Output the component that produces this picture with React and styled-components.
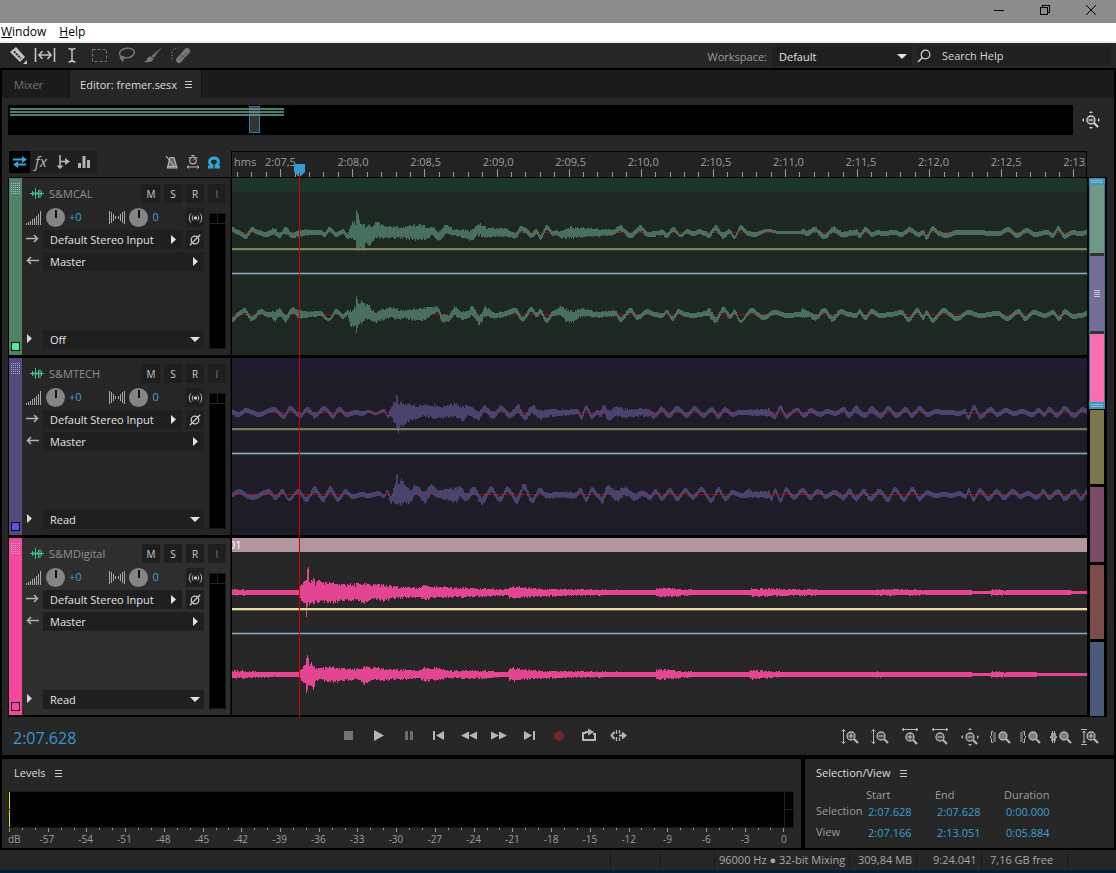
import React, { useState } from 'react';
import styled, { createGlobalStyle } from 'styled-components';

const GlobalStyle = createGlobalStyle`
  * {
    box-sizing: border-box;
  }

  body {
    margin: 0;
    background: #000;
  }

  body, button, input, select {
    font-family: "Open Sans", "Noto Sans", sans-serif;
    font-size: 11px;
  }

  button, input, select {
    margin: 0;
    padding: 0;
    border: none;
    border-radius: 0;
    background: none;
    color: inherit;
    outline: none;
  }

  select {
    appearance: none;
  }

  svg {
    display: block;
    flex: none;
  }
`;

/* ---------- time ---------- */

const VIEW_START = 127.166;
const VIEW_LENGTH = 5.884;
const PLAYHEAD = 127.628;

const percentOf = (seconds) => (seconds / VIEW_LENGTH) * 100;

const labelTimes = Array.from({ length: 12 }, (_, i) => 127.5 + i * 0.5);
const tickTimes = Array.from({ length: 59 }, (_, i) => 1272 + i);

const formatTime = (t) => {
  const tenths = Math.round(t * 10) - 1200;
  const s = Math.floor(tenths / 10);
  return `2:${String(s).padStart(2, '0')},${tenths % 10}`;
};

/* ---------- wave data ---------- */

// "x centre half" triples, x is divided by step and moved by offset
const points = (offset, step, text) =>
  text.trim().split(',').map((p) => {
    const [x, c, h = 2] = p.trim().split(' ').map(Number);
    return [x / step + offset, c, h];
  });

const calTop = points(0, 1, `0 3,6 0,13 -4,20 3,26 0,33 -2,42 1 4,47 -3,53 2 4,60 -3,67 -1 3,75 0 3,88 0,92 -2,97 3,
  104 -2,111 1,115 -4,118 0 6,120 3 10,123 0 11,124 2 21,126 -1 19,128 -3 14,131 -4 15,134 -2 8,137 -3 12,140 -2 9,
  144 2 9,150 1 7,160 0 7,170 0 6,180 0 8,190 0 9,194 -1 6,200 1 5,206 -4 5,214 3 5,222 0 3,230 -1 4,238 -3 5,
  247 3 7,255 0 5,270 0 5,283 -3 3,289 4 3,293 2,299 -3 3,304 1,308 -5,314 5,321 -1,323 0,329 -2 4,338 0 6,350 0 5,
  365 0 4,380 0 3,388 4 3,398 -3,408 4 3,416 -2,430 0 3,434 -3,441 3,448 -3 1,455 1,461 -1,467 1,473 -1,476 -3 3,
  483 4 3,491 -3 3,497 1,502 -5 1,508 5,516 -1,522 -2,535 2 1,548 0 1,560 0 1,568 0 1,571 1 3,574 -1,582 3 3,592 -4,
  601 3 3,610 -2 3,624 0 3,627 -3,633 3,640 -2,645 0,651 -1,662 0,669 -2,677 3,686 -2,691 0,694 -5,700 4,707 -1,
  713 -3,725 0,740 0,766 -1,776 3,784 -3,795 2,802 -2,815 0,820 -3,826 4,832 -4,840 0,848 -1,855 0`);

const calBottom = points(0, 1, `0 -5,2 -4,5 0,12 4,19 -4,29 3,35 0,39 0 3,42 -2 6,47 2 5,53 -4 4,60 4 3,67 0 4,75 0 3,
  88 1,96 -5 1,104 3,111 -2,115 2,118 -4 8,121 -3 10,123 -2 12,124 -1 20,126 0 12,128 2 12,129 4 14,132 3 9,135 3 8,
  141 -2 6,143 -4 5,150 0 6,158 2 6,165 0 6,172 0 4,180 0 6,190 0 7,198 3 5,205 5 3,210 -4 4,216 -4 3,222 3 5,
  230 -1 4,236 0 4,239 4 5,247 -5 5,253 3 5,262 -1 3,270 0 3,283 4,290 -5 3,299 5,304 0,308 3,314 -6,321 1,328 4 5,
  334 -1 7,340 -2 6,350 2 4,365 0 3,383 1 3,388 -5,398 4,405 -3,415 3,422 0,430 -1,434 3 1,440 -4,446 3,453 0,461 -1,
  467 0,474 1,476 3 5,480 -2 5,483 -6 3,491 5 3,498 -2,502 3,508 -7 1,519 4,531 -3,542 2,555 -1,568 0,570 2 5,
  576 0 3,583 -3 3,592 4,600 -4 3,609 3,616 0,624 -1,627 3,633 -3,639 3,648 -1,658 0,669 2,676 -5,685 4,691 -3,694 2,
  700 -6,711 4,724 -4,736 2,748 -1,765 1,775 -4,786 3,793 -4,801 2,813 -1,820 2,827 -4,832 3,841 -2,848 -1,855 1`);

const techTop = [
  ...points(-7, 3, `21 0 3,38 -2,62 2,100 -2,145 3,175 -4,193 4,225 -3,245 3,268 -3 3,298 4,322 -4,340 3,365 -2,390 0,
    410 -1,430 1 1,450 -1 1,475 2 1,487 -4 1,495 0 4,503 0 11,510 0 12,514 0 20,519 -6 17,525 0 13,537 -3 13,545 0 9,
    550 0 10,575 0 7,600 2 6,625 0 8,650 0 6,688 2 8,712 -1 8,728 2 5,760 -3 5,776 4 3,803 -3 4,827 4 3,852 -3 3,
    880 4 5`),
  ...points(288, 3, `0 0 4,12 -5 3,35 3 5,60 -2 5,90 0 4,140 0 3,172 1,182 -5,197 5 3,214 -4,232 0,240 -1 4,250 3 5,
    265 -3 6,290 1 5,315 -1 5,350 0 4,380 0 4,402 -3 3,424 3 3,446 -3,470 4 3,500 -3,522 4,549 -3,575 3,593 -4,613 3,
    637 -2,655 0,690 0 3,745 0 4,763 -4,780 5,797 -4,830 3 1,850 -3,872 2,890 -1`),
  ...points(588, 3, `0 -2,20 1,45 -1,70 3,86 -3 3,104 3 4,135 -3 3,152 3 4,182 -3 3,204 4,228 -3,257 3,275 -3,297 4,
    320 -2,350 1,370 0,390 0,415 -1,433 1,444 -5,460 5,480 -4,510 3,530 -2,557 2,580 -1,605 1,635 -2,655 2,670 -2,
    686 3,710 -3,732 4,762 -3,787 3,801 1`),
];

const techBottom = [
  ...points(-7, 3, `21 0,38 3,80 -3,130 3,150 -3,172 3,190 -5 1,218 3,243 -5,268 5 4,292 -5 3,315 5 3,338 -5,360 3,
    382 -2,410 0,430 -1,460 1,475 -2 1,485 3 1,497 -6 4,505 0 8,512 2 14,514 5 19,520 1 12,529 3 14,540 0 10,
    555 -2 7,570 5 5,598 -3 6,618 5 6,640 0 4,665 0 6,690 -1 9,705 3 6,722 -3 4,745 4 4,770 -6 4,797 5 3,823 -5 3,
    847 5 3,875 -6 4,890 3 4`),
  ...points(288, 3, `0 3 4,10 8 4,35 -6 3,58 4 3,80 -1 3,120 0 3,165 -1 3,180 4,197 -5,215 5,235 -2,244 -6 4,262 5 5,
    290 -2 6,312 3 5,345 -2 4,370 1 3,388 -3,405 3 3,425 -4,448 4,470 -4,495 4,517 -3,543 5,573 -6,594 5,615 -4,637 2,
    665 -1,685 1 5,700 0 3,745 0 4,753 -4,764 4,780 -6,797 5,820 -3,847 4,870 -3,890 3`),
  ...points(588, 3, `0 2,15 -2,42 2,70 -3 3,87 3 3,107 -4 3,130 3 3,150 -4 3,178 3 3,202 -5,224 5,250 -5,276 5,297 -4,
    320 2,345 -1,370 0,395 -1,415 1,435 -2,445 4,459 -5,478 4,505 -4,528 3,550 -3,577 3,600 -2,622 1,650 -3,669 3,
    687 -3,713 3,732 -4,762 3,783 -4,801 4`),
];

const digitalTop = [
  ...points(-7, 3, `21 0 3,100 0 2,222 0 2,226 0 8,237 0 11,241 0 12,243 -7 19,246 5 20,249 7 19,251 0 14,255 0 13,
    262 0 13,265 2 15,270 0 10,277 1 14,290 0 11,300 0 10,330 0 11,360 0 9,385 0 9,415 0 11,440 0 8,480 0 9,520 0 6,
    585 0 5,590 0 8,640 0 6,700 0 5,780 0 4,848 0 3,853 0 7,883 0 6`),
  ...points(288, 3, `0 0 6,60 0 4,200 0 3,403 0 2,408 0 5,470 0 4,530 0 2,686 0 2,690 0 4,760 0 4,830 0 3,890 0 3`),
  ...points(588, 3, `0 0 2,157 0 2,160 0 3,240 0 3,400 0 2,510 0 1,513 0 3,600 0 2,700 0 2,801 0 1`),
];

const digitalBottom = [
  ...points(-7, 3, `21 0 4,100 0 3,222 0 2,226 0 5,240 0 10,242 0 14,244 -3 22,247 4 17,251 0 12,257 0 14,264 -4 13,
    270 0 9,285 0 7,320 0 8,340 0 8,370 0 6,400 0 6,415 0 10,440 0 7,500 0 6,585 0 4,590 0 7,640 0 7,660 0 4,780 0 4,
    848 0 2,853 0 8,870 0 7,883 0 6`),
  ...points(288, 3, `0 0 6,60 0 4,200 0 3,403 0 2,408 0 6,470 0 4,530 0 2,686 0 2,690 0 5,760 0 3,830 0 2,890 0 2`),
  ...points(588, 3, `0 0 2,157 0 2,160 0 3,240 0 2,400 0 2,510 0 1,513 0 3,600 0 2,700 0 1,801 0 1`),
];

const noise = (n) => {
  let v = Math.imul(n + 1, 2654435761);
  v ^= v >>> 15;
  v = Math.imul(v, 2246822519);
  v ^= v >>> 13;
  return (v >>> 0) / 4294967296;
};

// one column per pixel
const wavePath = (data, centre) => {
  let d = '';
  let i = 0;
  for (let x = 0; x < 855; x += 1) {
    while (i < data.length - 2 && data[i + 1][0] <= x) i += 1;
    const [x0, c0, h0] = data[i];
    const [x1, c1, h1] = data[i + 1];
    const k = Math.min(1, Math.max(0, (x - x0) / (x1 - x0 || 1)));
    const ease = (1 - Math.cos(Math.PI * k)) / 2;
    const c = c0 + (c1 - c0) * ease;
    const h = h0 + (h1 - h0) * k;
    const rough = h > 2.5 ? Math.min(4, h * 0.45) : 0;
    const top = Math.round(centre - c - h + rough * noise(x));
    const bottom = Math.round(centre - c + h - rough * noise(x + 999)) + 1;
    d += `M${x} ${top}h1V${bottom}h-1z`;
  }
  return d;
};

const tracks = [
  {
    name: 'S&MCAL', mode: 'Off', strip: '#4f816b', led: '#45ef9e', head: '#1d3429', lane: '#1d2823',
    wave: '#4a7a64', volume: '#7f7f59', channels: [calTop, calBottom],
  },
  {
    name: 'S&MTECH', mode: 'Read', strip: '#524b7e', led: '#5f4fe2', head: '#1f1b31', lane: '#1e1c27',
    wave: '#504876', volume: '#7b765a', channels: [techTop, techBottom],
  },
  {
    name: 'S&MDigital', mode: 'Read', strip: '#f4479d', led: '#f4479d', head: '#b294a2', lane: '#262626',
    wave: '#e34592', volume: '#e8df9c', channels: [digitalTop, digitalBottom], selected: true, clip: '01',
  },
];

/* ---------- window ---------- */

const Window = styled.div`
  display: flex;
  flex-direction: column;
  min-height: 100vh;
  background: #000;
  color: #d6d6d6;
  line-height: 16px;
`;

const TitleBar = styled.div`
  display: flex;
  justify-content: flex-end;
  height: 23px;
  padding-right: 2px;
  background: #8c8c8c;
`;

const CaptionButton = styled.button`
  display: flex;
  align-items: center;
  justify-content: center;
  width: 46px;
  padding-bottom: 3px;
  color: #000;
`;

const MenuBar = styled.nav`
  display: flex;
  gap: 13px;
  height: 20px;
  padding-left: 1px;
  background: #fff;
  border-bottom: 2px solid #f0f0f0;
`;

const MenuItem = styled.button`
  color: #000;
  font-size: 12px;
  line-height: 18px;
`;

const ToolBar = styled.div`
  display: flex;
  align-items: center;
  height: 25px;
  padding-right: 5px;
  background: #262626;
`;

const Tools = styled.div`
  display: flex;
  flex: 1;
  padding-left: 4px;
`;

const Tool = styled.button`
  display: flex;
  align-items: center;
  justify-content: center;
  width: 27px;
  height: 24px;
  padding-bottom: 1px;
  color: ${(p) => (p.$dim ? '#777' : '#c4c4c4')};
`;

const WorkspaceLabel = styled.label`
  padding: 2px 5px 0 0;
  color: #9a9a9a;
`;

const SelectBox = styled.div`
  display: grid;
  align-items: center;
  flex: 1;
  height: 19px;
  background: #1f1f1f;
  color: #e2e2e2;

  select, svg {
    grid-area: 1 / 1;
  }

  select {
    width: 100%;
    height: 19px;
    padding-left: 7px;
    cursor: pointer;
  }

  svg {
    justify-self: end;
    margin-right: ${(p) => p.$inset || 5}px;
    pointer-events: none;
  }
`;

const WorkspaceSelect = styled(SelectBox)`
  flex: none;
  width: 140px;
  margin: 2px 5px 0 0;
`;

const SearchBox = styled.label`
  display: flex;
  align-items: center;
  gap: 11px;
  width: 194px;
  height: 19px;
  background: #202020;

  input {
    flex: 1;
    min-width: 0;
  }

  input::placeholder {
    color: #d6d6d6;
    opacity: 1;
  }
`;

const Panel = styled.section`
  background: #262626;
`;

/* ---------- editor ---------- */

const EditorPanel = styled(Panel)`
  margin: 2px 2px 4px;
`;

const TabBar = styled.div`
  display: flex;
  height: 28px;
  background: #1b1b1b;
`;

const Tab = styled.button`
  display: flex;
  align-items: center;
  gap: 8px;
  padding: 0 ${(p) => (p.$active ? '9px 0 10px' : '26px 0 12px')};
  background: ${(p) => (p.$active ? '#262626' : 'transparent')};
  color: ${(p) => (p.$active ? '#dcdcdc' : '#757575')};
  border-right: 1px solid #111;
`;

const OverviewRow = styled.div`
  display: flex;
  align-items: center;
  padding: 7px 14px 16px 6px;
`;

const Overview = styled.div`
  position: relative;
  flex: 1;
  height: 30px;
  padding: 3px 2px;
  margin-right: 9px;
  background: #000;
`;

const OverviewClip = styled.div`
  width: 25.8%;
  height: 2px;
  margin-bottom: 1px;
  background: #4f806a;
`;

const OverviewRange = styled.div`
  position: absolute;
  top: 1px;
  left: 22.6%;
  width: 11px;
  height: 27px;
  border: 1px solid #337ba6;
  background: rgba(150, 150, 150, 0.35);
`;

const Arrange = styled.div`
  display: flex;
  align-items: flex-end;
  padding: 0 7px 0 6px;
`;

const Timeline = styled.div`
  position: relative;
  flex: 1;
  min-width: 0;
`;

const RulerRow = styled.div`
  display: flex;
  height: 26px;
`;

const TrackTools = styled.div`
  display: flex;
  justify-content: space-between;
  width: 223px;
  padding: 0 7px 4px 1px;
`;

const ToolGroup = styled.div`
  display: flex;
  padding-right: ${(p) => (p.$plain ? 0 : 3)}px;
  background: ${(p) => (p.$plain ? 'none' : '#1f1f1f')};
`;

const SmallTool = styled.button`
  display: flex;
  align-items: center;
  justify-content: center;
  width: 21px;
  height: 22px;
  background: ${(p) => (p.$on ? '#000' : 'transparent')};
  color: ${(p) => (p.$blue ? '#2fa7dc' : '#b4b4b4')};
`;

const FxTool = styled(SmallTool)`
  width: 22px;
  padding-bottom: 3px;
  font-size: 15px;
  font-style: italic;
`;

const Ruler = styled.div`
  display: flex;
  flex-direction: column;
  justify-content: space-between;
  flex: 1;
  overflow: hidden;
  background: #222;
  border: 1px solid #000;
  border-bottom: none;
  color: #9c9c9c;
`;

const RulerLabels = styled.div`
  display: flex;
  padding-top: 3px;
  line-height: 14px;
  white-space: nowrap;
`;

const RulerLabel = styled.div`
  flex: none;
  width: ${percentOf(0.5)}%;
  text-align: center;
`;

const RulerUnit = styled.div`
  flex: none;
  width: ${percentOf(127.25 - VIEW_START)}%;
  text-indent: 2px;
`;

const RulerTicks = styled.div`
  display: flex;
  align-items: flex-end;
  height: 8px;
  padding-left: ${percentOf(127.2 - VIEW_START)}%;
`;

const RulerTick = styled.div`
  flex: none;
  width: ${percentOf(0.1)}%;
  height: ${(p) => (p.$major ? 8 : 5)}px;
  border-left: 1px solid #9a9a9a;
`;

const TrackList = styled.div`
  display: flex;
  flex-direction: column;
  gap: 3px;
  padding: 1px 0 2px 1px;
  background: #000;
`;

const Playhead = styled.div`
  position: absolute;
  top: 13px;
  bottom: 0;
  display: flex;
  flex-direction: column;
  align-items: center;
  width: 11px;
  margin-left: -5px;
  pointer-events: none;

  &::after {
    content: '';
    flex: 1;
    width: 1px;
    background: #cf0000;
  }
`;

/* ---------- track ---------- */

const TrackRow = styled.article`
  display: flex;
  height: 177px;
`;

const Strip = styled.div`
  display: flex;
  flex-direction: column;
  align-items: center;
  justify-content: space-between;
  width: 13px;
  padding: 5px 0 4px;
  background: ${(p) => p.$color};
`;

const Led = styled.div`
  width: 9px;
  height: 9px;
  border: 1px solid #0c0c0c;
  background: ${(p) => p.$color};
`;

const TrackHead = styled.div`
  display: flex;
  flex-direction: column;
  gap: 5px;
  width: 209px;
  padding: 6px 4px;
  background: ${(p) => (p.$selected ? '#2e2e2e' : '#262626')};
  border-right: 1px solid #161616;
`;

const Line = styled.div`
  display: flex;
  align-items: center;
  gap: 4px;
  height: 19px;
`;

const NameIcon = styled.div`
  padding: 0 1px 0 4px;
`;

const TrackName = styled.input`
  flex: 1;
  min-width: 0;
  color: #8f8f8f;
`;

const SquareButton = styled.button`
  display: flex;
  align-items: center;
  justify-content: center;
  flex: none;
  width: 18px;
  height: 19px;
  background: #1e1e1e;
  color: ${(p) => (p.$dim ? '#747474' : '#c8c8c8')};
  font-size: 10px;
`;

const TrackBody = styled.div`
  display: flex;
  flex: 1;
  gap: 5px;
`;

const Controls = styled.div`
  display: flex;
  flex-direction: column;
  gap: 3px;
  width: 178px;

  ${Line}:last-child {
    margin-top: auto;
  }
`;

const Knob = styled.div`
  flex: none;
  width: 19px;
  height: 19px;
  border-radius: 50%;
  background: linear-gradient(#111, #111) center 2px / 2px 8px no-repeat, #858585;
`;

const KnobValue = styled.input`
  width: ${(p) => p.$width}px;
  height: 17px;
  min-width: 0;
  margin-bottom: 2px;
  color: #3aa0d8;
`;

const LineIcon = styled.div`
  display: flex;
  width: 13px;
  padding-bottom: 2px;
  color: #b0b0b0;
`;

const Disclosure = styled.button`
  width: 13px;
  padding: 0 0 2px 1px;
`;

const Meter = styled.div`
  flex: 1;
  margin-top: 5px;
  background:
    linear-gradient(#262626, #262626) 0 9px / 100% 1px no-repeat,
    linear-gradient(#262626, #262626) center 0 / 1px 9px no-repeat,
    #000;
  border: 1px solid #161616;
`;

const Lane = styled.div`
  flex: 1;
  min-width: 0;
  overflow: hidden;
  background: ${(p) => p.$color};
  border-left: 1px solid #000;
`;

const ClipHead = styled.div`
  height: 14px;
  overflow: hidden;
  background: ${(p) => p.$color};
  color: #fff;
  line-height: 14px;
  text-indent: -3px;
`;

const WaveSvg = styled.svg`
  width: 100%;
  height: 163px;
`;

const MiniMap = styled.div`
  display: flex;
  flex-direction: column;
  gap: 3px;
  width: 20px;
  height: 540px;
  padding: 1px 2px;
  background: #000;
`;

const MiniRange = styled.div`
  position: relative;
  display: flex;
  flex-direction: column;
  gap: 3px;
  height: 231px;
  margin: 0 0 -2px;
  background: #333;
  border: solid #2d7ca6;
  border-width: 0 1px;
`;

const MiniTrack = styled.div`
  display: flex;
  align-items: center;
  justify-content: center;
  flex: 1;
  margin: 0 ${(p) => (p.$out ? 1 : 0)}px;
  background: ${(p) => p.$color};
`;

// grab bars on the ends of the visible range
const MiniHandle = styled.div`
  position: absolute;
  left: -1px;
  right: -1px;
  ${(p) => (p.$end ? 'bottom' : 'top')}: 0;
  height: 7px;
  border: 2px solid #3d94bb;
  background: linear-gradient(#8bbfd2 1px, #3d94bb 1px 2px, #8bbfd2 2px);
`;

/* ---------- transport ---------- */

const Transport = styled.div`
  display: flex;
  align-items: center;
  height: 38px;
  padding: 2px 9px 0 11px;
`;

const Clock = styled.output`
  flex: 0 0 320px;
  padding-top: 2px;
  color: #3399cf;
  font-size: 16px;
  line-height: 24px;
`;

const TransportButton = styled.button`
  display: flex;
  align-items: center;
  justify-content: center;
  width: 30px;
  height: 24px;
  padding-bottom: ${(p) => (p.$zoom ? 0 : 4)}px;
  color: #b6b6b6;
`;

const Group = styled.div`
  display: flex;
  margin-left: ${(p) => (p.$end ? 'auto' : 0)};
`;

/* ---------- bottom panels ---------- */

const BottomRow = styled.div`
  display: flex;
  gap: 4px;
  height: 89px;
  margin: 0 2px 2px;
`;

const LevelsPanel = styled(Panel)`
  flex: 1;
  min-width: 0;
  padding: 6px 7px 0 6px;
`;

const SelectionPanel = styled(Panel)`
  width: 309px;
  padding: 6px 0 0 11px;
`;

const PanelTitle = styled.h2`
  display: flex;
  align-items: center;
  gap: 9px;
  margin: 0;
  padding-left: ${(p) => p.$inset || 0}px;
  color: #dcdcdc;
  font-size: 11px;
  font-weight: 400;
  line-height: 16px;
`;

const LevelMeter = styled.div`
  display: flex;
  flex-direction: column;
  gap: 1px;
  height: 37px;
  margin-top: 10px;
  border: 1px solid #1a1a1a;
  background:
    linear-gradient(#222, #222) right 8px top 0 / 1px 100% no-repeat,
    linear-gradient(#222, #222) right 0 top 17px / 8px 1px no-repeat,
    #000;
`;

const LevelBar = styled.div`
  flex: 1;
  border-left: 1px solid #e8e800;
`;

const DbTicks = styled.div`
  display: flex;
  margin: 0 10px 0 1px;
  height: 5px;
`;

const DbTick = styled.div`
  flex: 1 1 0;
  height: ${(p) => (p.$major ? 4 : 2)}px;
  border-left: 1px solid #999;

  &:last-child {
    flex: 0 0 1px;
  }
`;

const DbLabels = styled.div`
  display: flex;
  margin: 0 10px 0 0;
  color: #9c9c9c;
  font-size: 10px;
  line-height: 12px;

  span {
    flex: none;
    width: 5%;
    text-align: center;
  }

  span:first-child {
    width: 2.5%;
    text-align: left;
  }
`;

const Times = styled.table`
  margin-top: 6px;
  border-collapse: collapse;
  color: #9c9c9c;

  th, td {
    width: 69px;
    padding: 0;
    font-weight: 400;
    line-height: 16px;
    text-align: left;
  }

  th:first-child, td:first-child {
    width: 50px;
  }

  tbody tr:last-child > * {
    padding-top: 5px;
  }

  input {
    display: block;
    width: 60px;
    height: 16px;
    padding-left: 2px;
    color: #3aa0d8;
  }
`;

const StatusBar = styled.footer`
  display: flex;
  flex: 1;
  justify-content: flex-end;
  min-height: 23px;
  padding-right: 48px;
  background: #262626;
  border-bottom: 3px solid #00203a;
  color: #a6a6a6;
`;

const StatusCell = styled.div`
  width: ${(p) => p.$width}px;
  padding-left: ${(p) => p.$inset || 0}px;
  border-left: 1px solid #1a1a1a;
  line-height: 20px;
  white-space: nowrap;

  &:last-child {
    border-right: 1px solid #1a1a1a;
  }
`;

/* ---------- icons ---------- */

const Icon = ({ size = 16, w = size, h = size, children, ...rest }) => (
  <svg width={w} height={h} viewBox={`0 0 ${w} ${h}`} fill="none" stroke="currentColor" aria-hidden="true" {...rest}>
    {children}
  </svg>
);

const MenuGlyph = () => (
  <Icon w={7} h={7} shapeRendering="crispEdges"><path d="M0 .5h7M0 3.5h7M0 6.5h7" stroke="#c8c8c8" /></Icon>
);

const Down = () => <Icon w={10} h={6}><path d="M0 0h10L5 5z" fill="currentColor" stroke="none" /></Icon>;
const Right = () => <Icon w={6} h={10}><path d="M0 0v9l5-4.5z" fill="currentColor" stroke="none" /></Icon>;

const Grip = () => (
  <Icon w={9} h={11} shapeRendering="crispEdges">
    <path d="M0 .5h9M0 2.5h9M0 4.5h9M0 6.5h9M0 8.5h9M0 10.5h9" stroke="#fff" strokeDasharray="1 1" opacity="0.5" />
  </Icon>
);

const WaveGlyph = () => (
  <Icon w={14} h={11} stroke="#3fbf87">
    <path d="M0 5.5h14" />
    <path d="M2.500 3v5M5.500 0v11M8.500 2v8M11.500 3v5M4 4v3M7 4v3M10 1v9" strokeWidth="1" />
  </Icon>
);

const VolumeGlyph = () => (
  <Icon w={16} h={14} stroke="#a8a8a8" shapeRendering="crispEdges">
    <path d="M.5 12v2M2.5 11v3M4.5 10v4M6.5 8v6M8.5 7v7M10.5 5v9M12.5 3v11M14.5 0v14" />
  </Icon>
);

const PanGlyph = () => (
  <Icon w={16} h={13} stroke="#a8a8a8" shapeRendering="crispEdges">
    <path d="M.5 0v13M2.5 1v11M4.5 3v7M6.5 5v3M9.5 5v3M11.5 3v7M13.5 1v11M15.5 0v13" />
  </Icon>
);

const MonitorGlyph = () => (
  <Icon w={15} h={12}>
    <circle cx="7.5" cy="6" r="1.3" fill="currentColor" />
    <path d="M5.2 3.5c-1.3 1.5-1.3 3.5 0 5M9.8 3.5c1.3 1.5 1.3 3.5 0 5M3 1.5c-2.3 2.6-2.3 6.4 0 9M12 1.5c2.3 2.6 2.3 6.4 0 9" />
  </Icon>
);

const PhaseGlyph = () => (
  <Icon w={12} h={12}><circle cx="6" cy="6" r="3.8" strokeWidth="1.3" /><path d="M.8 11.2L11.2.8" strokeWidth="1.3" /></Icon>
);

const ArrowGlyph = ({ back }) => (
  <Icon w={13} h={9}>
    <path d={back ? 'M13 4.5H2M5 1L1.5 4.5L5 8' : 'M0 4.5h11M8 1l3.5 3.5L8 8'} strokeWidth="1.6" />
  </Icon>
);

const Lens = ({ x = 9, y = 8, sign, solid }) => (
  <g>
    <circle cx={x} cy={y} r="4" fill={solid ? '#7d7d7d' : '#444'} strokeWidth="1.3" />
    <path d={`M${x + 3} ${y + 3}l4 4`} strokeWidth="2.2" />
    {sign && <path d={`M${x - 2.5} ${y}h5`} strokeWidth="1.2" />}
    {sign === '+' && <path d={`M${x} ${y - 2.5}v5`} strokeWidth="1.2" />}
  </g>
);

const FullZoom = () => (
  <Icon w={18} h={18}>
    <Lens x={9} y={9} sign="-" />
    <path d="M9 0l2 2H7zM9 18l2-2H7zM0 9l2-2v4zM18 9l-2-2v4z" fill="currentColor" stroke="none" />
  </Icon>
);

const vertical = <path d="M2.5 1v15M.5 3.5l2-2 2 2M.5 13.5l2 2 2-2" />;
const horizontal = <path d="M1 1.5h16M3 0L1 1.5 3 3M15 0l2 1.5L15 3" />;

const zoomIcons = [
  ['Zoom in amplitude', <>{vertical}<Lens x={10} sign="+" /></>],
  ['Zoom out amplitude', <>{vertical}<Lens x={10} sign="-" /></>],
  ['Zoom in time', <>{horizontal}<Lens x={9} y={9} sign="+" /></>],
  ['Zoom out time', <>{horizontal}<Lens x={9} y={9} sign="-" /></>],
  ['Zoom out full', null],
  ['Zoom to in point', <><path d="M2 3.5H.5v4L-1 9l1.500 1.500v4H2" /><path d="M2 4h3v10H2z" fill="#666" stroke="none" /><Lens x={12} y={8} solid /></>],
  ['Zoom to out point', <><path d="M-1 4h3v10h-3z" fill="#666" stroke="none" /><path d="M2 3.5h1.500v4L5 9l-1.500 1.500v4H2" /><Lens x={12} y={8} solid /></>],
  ['Zoom to selection', <><path d="M0 5h5v8H0z" fill="#888" stroke="none" /><path d="M1.500 3v4.500L-1 9l2.500 1.500V15M3.500 3v4.500L6 9l-2.500 1.500V15" /><Lens x={13} y={8} solid /></>],
  ['Zoom selected track', <><path d="M0 1.500h6M0 16.500h6M3 3v12M1.500 5L3 3l1.500 2M1.500 13L3 15l1.500-2" /><Lens x={10} sign="+" /></>],
];

const transportIcons = [
  ['Stop', <path d="M5 5h9v9H5z" fill="#747474" stroke="none" />],
  ['Play', <path d="M5 4v11l10-5.5z" fill="currentColor" stroke="none" />],
  ['Pause', <path d="M6 5h3v9H6zM11 5h3v9h-3z" fill="#6c6c6c" stroke="none" />],
  ['Previous', <path d="M4 5h2v9H4zM15 5v9L7 9.5z" fill="currentColor" stroke="none" />],
  ['Rewind', <path d="M10 5.500v8L2 9.500zM18 5.500v8l-8-4z" fill="currentColor" stroke="none" />],
  ['Fast forward', <path d="M2 5.500v8l8-4zM10 5.500v8l8-4z" fill="currentColor" stroke="none" />],
  ['Next', <path d="M5 5v9l8-4.500zM14 5h2v9h-2z" fill="currentColor" stroke="none" />],
  ['Record', <circle cx="10" cy="10" r="5" fill="#6e2828" stroke="none" />],
  ['Loop', <><path d="M7 7H4v7h12V8h-2" strokeWidth="2" /><path d="M6 6h4" strokeWidth="2" /><path d="M9 2.500v7L15 6z" fill="currentColor" stroke="none" /></>],
  ['Skip selection', <><path d="M5.500 6L2.500 9.500l3 3.500" strokeWidth="2" /><path d="M7.500 4v4M7.500 11v4M10.500 4v3.500M10.500 11.500v3.500" strokeWidth="1.300" /><path d="M10 9.500h5" strokeWidth="2" /><path d="M13 5.500v8l5-4z" fill="currentColor" stroke="none" /></>],
];

const tools = [
  ['Razor', false, <><path d="M1 6l6-5 9 10-5 5z" fill="currentColor" stroke="none" /><path d="M5 5.500l7 7" stroke="#262626" strokeWidth="2" strokeDasharray="2 1" /><path d="M18 14v4h-4z" fill="currentColor" stroke="none" /></>],
  ['Slip', false, <path d="M-.5 2v14M18.500 2v14M3 9h12M6.500 5L3 9l3.500 4M11.500 5L15 9l-3.500 4" strokeWidth="1.6" />],
  ['Time selection', false, <path d="M5.500 2.500Q9 2.500 9 5Q9 2.500 12.500 2.500M9 5v9M5.500 16Q9 16 9 13.500Q9 16 12.500 16" strokeWidth="1.4" />],
  ['Marquee', true, <path d="M2.500 3.500h14v12h-14z" strokeDasharray="3 2" />],
  ['Lasso', true, <><ellipse cx="10" cy="7" rx="7.500" ry="4.800" transform="rotate(-8 10 7)" strokeWidth="1.4" /><path d="M5 10.500q-3 1-1 2.500t3-.5-2-2q-1 3 1 5" strokeWidth="1.4" /></>],
  ['Brush', true, <path d="M18 1L9.500 12 7.500 10zM7 10.500l2.500 2.500Q8 17 0 16q3-1 3-3t4-2.500z" fill="currentColor" stroke="none" />],
  ['Spot healing', true, <><path d="M8 14L16 5" strokeWidth="6" strokeLinecap="round" /><path d="M9.500 9l5 3M10 12.500l5-5.500" stroke="#333" strokeDasharray="1 1" /><path d="M1 13V7q0-5 7-5" strokeDasharray="1 2" strokeWidth="1.4" /></>],
];

/* ---------- parts ---------- */

const Select = ({ options, value, arrow = 'right', inset, label }) => (
  <SelectBox $inset={inset}>
    <select defaultValue={value} aria-label={label}>
      {options.map((o) => <option key={o}>{o}</option>)}
    </select>
    {arrow === 'right' ? <Right /> : <Down />}
  </SelectBox>
);

const Waves = ({ track }) => (
  <WaveSvg viewBox="0 0 855 163" preserveAspectRatio="none" shapeRendering="crispEdges" role="img" aria-label={`${track.name} wave form`}>
    {track.channels.map((data, i) => (
      <React.Fragment key={i}>
        {!track.selected && <rect y={i ? 122 : 40} width="855" height="1" fill="#b00000" />}
        <path d={wavePath(data, i ? 122 : 40)} fill={track.wave} opacity={track.selected ? 1 : 0.88} />
      </React.Fragment>
    ))}
    <path d="M0 56h855v2H0z" fill={track.volume} />
    <path d="M0 58h855v1H0z" fill={track.volume} opacity="0.3" />
    <path d="M0 80h855v3H0z" fill="#3b4d55" />
    <path d="M0 81h855v1H0z" fill="#8fa9b5" />
  </WaveSvg>
);

const Track = ({ track }) => {
  const [armed, setArmed] = useState('');

  return (
    <TrackRow>
      <Strip $color={track.strip}>
        <Grip />
        <Led $color={track.led} />
      </Strip>
      <TrackHead $selected={track.selected}>
        <Line>
          <NameIcon><WaveGlyph /></NameIcon>
          <TrackName defaultValue={track.name} aria-label="Track name" />
          {['M', 'S', 'R', 'I'].map((b) => (
            <SquareButton key={b} $dim={b === 'I'} aria-pressed={armed === b} onClick={() => setArmed(b)}>{b}</SquareButton>
          ))}
        </Line>
        <TrackBody>
          <Controls>
            <Line>
              <VolumeGlyph />
              <Knob />
              <KnobValue $width={37} defaultValue="+0" aria-label="Volume" />
              <PanGlyph />
              <Knob />
              <KnobValue $width={30} defaultValue="0" aria-label="Pan" />
              <SquareButton aria-label="Monitor input"><MonitorGlyph /></SquareButton>
            </Line>
            <Line>
              <LineIcon><ArrowGlyph /></LineIcon>
              <Select label="Input" value="Default Stereo Input" options={['Default Stereo Input', 'None']} />
              <SquareButton aria-label="Invert phase"><PhaseGlyph /></SquareButton>
            </Line>
            <Line>
              <LineIcon><ArrowGlyph back /></LineIcon>
              <Select label="Output" value="Master" options={['Master', 'None']} />
            </Line>
            <Line>
              <Disclosure aria-label="Show automation"><Right /></Disclosure>
              <Select label="Automation" value={track.mode} options={['Off', 'Read', 'Latch', 'Touch', 'Write']} arrow="down" inset={4} />
            </Line>
          </Controls>
          <Meter />
        </TrackBody>
      </TrackHead>
      <Lane $color={track.lane}>
        <ClipHead $color={track.head}>{track.clip}</ClipHead>
        <Waves track={track} />
      </Lane>
    </TrackRow>
  );
};

const App = () => {
  const head = (PLAYHEAD - VIEW_START) / VIEW_LENGTH;

  return (
    <Window>
      <GlobalStyle />
      <TitleBar>
        <CaptionButton aria-label="Minimise"><Icon w={10} h={10} shapeRendering="crispEdges"><path d="M0 5.5h10" /></Icon></CaptionButton>
        <CaptionButton aria-label="Restore"><Icon w={10} h={10} shapeRendering="crispEdges"><path d="M.5 2.5h7v7h-7zM2.5 2.5v-2h7v7h-2" /></Icon></CaptionButton>
        <CaptionButton aria-label="Close"><Icon w={10} h={10}><path d="M0 0l10 10M10 0L0 10" /></Icon></CaptionButton>
      </TitleBar>
      <MenuBar>
        <MenuItem><u>W</u>indow</MenuItem>
        <MenuItem><u>H</u>elp</MenuItem>
      </MenuBar>
      <ToolBar>
        <Tools>
          {tools.map(([name, dim, art]) => (
            <Tool key={name} $dim={dim} aria-label={name}><Icon size={18} overflow="visible">{art}</Icon></Tool>
          ))}
        </Tools>
        <WorkspaceLabel htmlFor="workspace">Workspace:</WorkspaceLabel>
        <WorkspaceSelect>
          <select id="workspace" defaultValue="Default">
            <option>Default</option>
            <option>Classic</option>
          </select>
          <Down />
        </WorkspaceSelect>
        <SearchBox>
          <Icon w={14} h={14}><circle cx="8.5" cy="5.5" r="4.3" strokeWidth="1.2" /><path d="M5.5 8.5L1 13" strokeWidth="1.4" /></Icon>
          <input placeholder="Search Help" aria-label="Search Help" />
        </SearchBox>
      </ToolBar>

      <EditorPanel>
        <TabBar>
          <Tab>Mixer</Tab>
          <Tab $active>Editor: fremer.sesx <MenuGlyph /></Tab>
        </TabBar>
        <OverviewRow>
          <Overview>
            <OverviewClip />
            <OverviewClip />
            <OverviewClip />
            <OverviewRange />
          </Overview>
          <FullZoom />
        </OverviewRow>

        <Arrange>
          <Timeline>
            <RulerRow>
              <TrackTools>
                <ToolGroup>
                  <SmallTool $on $blue aria-label="Inputs and outputs">
                    <Icon size={14}><path d="M0 4.500h10M13 9.500H3" strokeWidth="2" /><path d="M9 1v7l5-3.500zM5 6v7L0 9.500z" fill="currentColor" stroke="none" /></Icon>
                  </SmallTool>
                  <FxTool aria-label="Effects">fx</FxTool>
                  <SmallTool aria-label="Sends">
                    <Icon size={14}><path d="M4 0v13M4 6.500h6M1.500 10.500L4 13l2.500-2.500" strokeWidth="1.6" /><path d="M9 3v7l5-3.500z" fill="currentColor" stroke="none" /></Icon>
                  </SmallTool>
                  <SmallTool aria-label="EQ">
                    <Icon w={12} h={12}><path d="M0 7h3v5H0zM4.500 0h3v12h-3zM9 4h3v8H9z" fill="currentColor" stroke="none" /></Icon>
                  </SmallTool>
                </ToolGroup>
                <ToolGroup $plain>
                  <SmallTool aria-label="Metronome">
                    <Icon size={14}><path d="M5 2.500h4L12 13H2.500z" fill="#666" strokeWidth="1.2" /><path d="M1 1l8 10M2 11.500h10" strokeWidth="1.2" /></Icon>
                  </SmallTool>
                  <SmallTool aria-label="Global clip stretching">
                    <Icon size={14}><circle cx="7" cy="5.500" r="3.300" strokeWidth="1.2" /><path d="M7 5.500l1.500-1.500M5.500.5h3M2.500 2l1 1M11.500 2l-1 1M1 12h12M3 10.500L1 12l2 1.500M11 10.500l2 1.500-2 1.500" /></Icon>
                  </SmallTool>
                  <SmallTool $blue aria-label="Snap">
                    <Icon size={14}><path d="M1 12h4V10.500Q2.500 9 2.500 6.500Q3 3 7 3T11.500 6.500Q11.500 9 9 10.500V12h4" strokeWidth="2.800" /></Icon>
                  </SmallTool>
                </ToolGroup>
              </TrackTools>
              <Ruler>
                <RulerLabels>
                  <RulerUnit>hms</RulerUnit>
                  {labelTimes.map((t) => <RulerLabel key={t}>{formatTime(t)}</RulerLabel>)}
                </RulerLabels>
                <RulerTicks>
                  {tickTimes.map((t) => <RulerTick key={t} $major={t % 5 === 0} />)}
                </RulerTicks>
              </Ruler>
            </RulerRow>
            <TrackList>
              {tracks.map((t) => <Track key={t.name} track={t} />)}
            </TrackList>
            <Playhead style={{ left: `calc(224px + (100% - 224px) * ${head})` }}>
              <Icon w={11} h={13}><path d="M0 0h11v8l-4 4h-3l-4-4z" fill="#3399d0" stroke="none" /><path d="M5.5 9v4" stroke="#cf0000" /></Icon>
            </Playhead>
          </Timeline>
          <MiniMap>
            <MiniRange>
              <MiniTrack $color="#6f9786" />
              <MiniTrack $color="#756f97">
                <Icon w={6} h={8} shapeRendering="crispEdges"><path d="M0 .5h6M0 2.5h6M0 4.5h6M0 6.5h6" stroke="#c9c6dc" /></Icon>
              </MiniTrack>
              <MiniTrack $color="#f76fb1" />
              <MiniHandle />
              <MiniHandle $end />
            </MiniRange>
            {['#7a764c', '#7c4c67', '#7c4c4a', '#4b5a7b'].map((c) => <MiniTrack key={c} $out $color={c} />)}
          </MiniMap>
        </Arrange>

        <Transport>
          <Clock>2:07.628</Clock>
          <Group>
            {transportIcons.map(([name, art]) => (
              <TransportButton key={name} aria-label={name}><Icon size={18}>{art}</Icon></TransportButton>
            ))}
          </Group>
          <Group $end>
            {zoomIcons.map(([name, art]) => (
              <TransportButton key={name} $zoom aria-label={name}>
                {art ? <Icon size={18} overflow="visible">{art}</Icon> : <FullZoom />}
              </TransportButton>
            ))}
          </Group>
        </Transport>
      </EditorPanel>

      <BottomRow>
        <LevelsPanel>
          <PanelTitle $inset={6}>Levels <MenuGlyph /></PanelTitle>
          <LevelMeter>
            <LevelBar />
            <LevelBar />
          </LevelMeter>
          <DbTicks>
            {Array.from({ length: 61 }, (_, i) => <DbTick key={i} $major={i % 3 === 0} />)}
          </DbTicks>
          <DbLabels>
            <span>dB</span>
            {Array.from({ length: 20 }, (_, i) => <span key={i}>{(i + 1) * 3 - 60}</span>)}
          </DbLabels>
        </LevelsPanel>
        <SelectionPanel>
          <PanelTitle>Selection/View <MenuGlyph /></PanelTitle>
          <Times>
            <thead>
              <tr><td /><th>Start</th><th>End</th><th>Duration</th></tr>
            </thead>
            <tbody>
              {[
                ['Selection', '2:07.628', '2:07.628', '0:00.000'],
                ['View', '2:07.166', '2:13.051', '0:05.884'],
              ].map(([name, ...values]) => (
                <tr key={name}>
                  <th scope="row">{name}</th>
                  {values.map((v, i) => (
                    <td key={i}><input defaultValue={v} aria-label={`${name} ${['start', 'end', 'duration'][i]}`} /></td>
                  ))}
                </tr>
              ))}
            </tbody>
          </Times>
        </SelectionPanel>
      </BottomRow>

      <StatusBar>
        <StatusCell $width={50} />
        <StatusCell $width={54} />
        <StatusCell $width={135} $inset={4}>96000 Hz ● 32-bit Mixing</StatusCell>
        <StatusCell $width={67} $inset={8}>309,84 MB</StatusCell>
        <StatusCell $width={65} $inset={16}>9:24.041</StatusCell>
        <StatusCell $width={87} $inset={8}>7,16 GB free</StatusCell>
      </StatusBar>
    </Window>
  );
};

export default App;
